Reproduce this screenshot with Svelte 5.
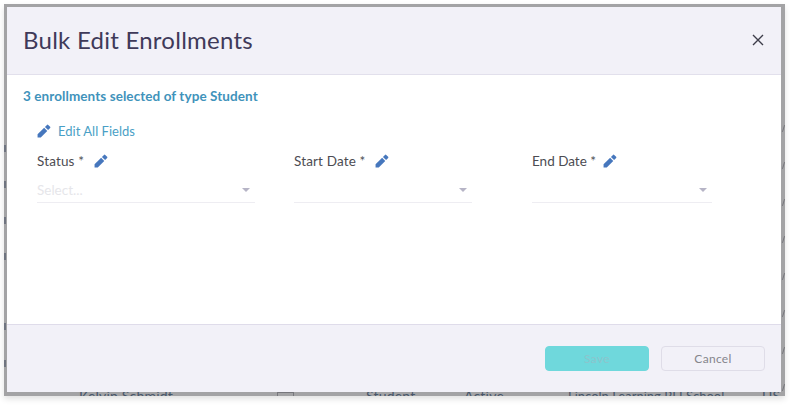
<script>
	const fields = [
		{ label: 'Status *', placeholder: 'Select...', width: 218 },
		{ label: 'Start Date *', placeholder: '', width: 178 },
		{ label: 'End Date *', placeholder: '', width: 180 }
	];
	const pencilBody = 'M1 17.6V23h5.4L17.6 11.8l-5.4-5.4L1 17.6z';
	const pencilTop = 'M22.5 6.9a1.5 1.5 0 0 0 0-2.1l-3.3-3.3a1.5 1.5 0 0 0-2.1 0l-3.5 3.5 5.4 5.4 3.5-3.5z';
	// background table shows through the frame at the edges
	const rightTicks = [125, 162, 199, 236, 273, 310, 347, 384];
	const leftTicks = [145, 181, 217, 253, 323, 360];
</script>

<div class="page">
	<div class="backdrop">
		<!-- table row behind the modal -->
		<div class="behind">
			<span style="left: 75px">Kelvin Schmidt</span>
			<i class="box"></i>
			<span style="left: 362px">Student</span>
			<span style="left: 460px">Active</span>
			<span class="school" style="left: 564px">Lincoln Learning RLI School</span>
			<span style="left: 758px">US</span>
		</div>
		{#each rightTicks as y}
			<i class="tick" style="top: {y - 4}px; right: 1px"></i>
		{/each}
		{#each leftTicks as y}
			<i class="tick left" style="top: {y - 4}px; left: 0"></i>
		{/each}

		<div class="dialog">
			<header class="head">
				<h1>Bulk Edit Enrollments</h1>
				<button class="close" aria-label="Close">
					<svg width="12" height="12" viewBox="0 0 12 12" fill="none" stroke="#3d3d4a" stroke-width="1.4">
						<path d="M1 1l10 10M11 1L1 11" />
					</svg>
				</button>
			</header>

			<main class="body">
				<p class="count">3 enrollments selected of type Student</p>
				<a class="edit-all" href="#all">
					<svg width="14" height="14" viewBox="0 0 24 24" fill="#4677bd"><path d={pencilBody} /><path d={pencilTop} /></svg>
					Edit All Fields
				</a>
				<div class="fields">
					{#each fields as f}
						<div class="field">
							<div class="label">
								<span>{f.label}</span>
								<svg width="14" height="14" viewBox="0 0 24 24" fill="#4677bd"><path d={pencilBody} /><path d={pencilTop} /></svg>
							</div>
							<div class="select" style="width: {f.width}px">
								<span class="placeholder">{f.placeholder}</span>
								<span class="caret"></span>
							</div>
						</div>
					{/each}
				</div>
			</main>

			<footer class="foot">
				<button class="btn save" disabled>Save</button>
				<button class="btn cancel">Cancel</button>
			</footer>
		</div>
	</div>
</div>

<style>
	:global(body) {
		margin: 0;
		background: #fff;
	}

	.page {
		width: 790px;
		height: 407px;
		padding: 4px 5px 0 4px;
		box-sizing: border-box;
		font-family: Lato, "Open Sans", sans-serif;
	}

	.backdrop {
		position: relative;
		height: 392px;
		padding: 3px 4px 4px 3px;
		box-sizing: border-box;
		background: #a3a3a5;
		box-shadow: 0 3px 6px rgba(0, 0, 0, 0.12);
		overflow: hidden;
	}

	.behind span {
		position: absolute;
		bottom: -8px;
		font-size: 14px;
		letter-spacing: 0.2px;
		color: #47566a;
		white-space: nowrap;
	}

	.behind .school {
		font-size: 13px;
		letter-spacing: 0;
	}

	.box {
		position: absolute;
		left: 273px;
		bottom: -4px;
		width: 15px;
		height: 6px;
		border: 1px solid #77777c;
	}

	.tick {
		position: absolute;
		width: 1px;
		height: 7px;
		background: #77777c;
		transform: rotate(18deg);
	}

	.tick.left {
		width: 2px;
		background: #6f7480;
		transform: none;
	}

	.dialog {
		position: relative;
		height: 100%;
		display: flex;
		flex-direction: column;
		background: #fff;
	}

	.head {
		height: 68px;
		flex: none;
		box-sizing: border-box;
		display: flex;
		align-items: center;
		justify-content: space-between;
		padding: 0 16px 2px;
		background: #f2f1f8;
		border-bottom: 1px solid #e2e0ec;
	}

	h1 {
		margin: 0;
		font-size: 24px;
		font-weight: 400;
		letter-spacing: 0.25px;
		color: #3f3a5a;
	}

	.close {
		display: flex;
		margin-right: 1px;
		background: none;
		border: none;
		padding: 0;
	}

	.body {
		flex: 1;
		padding: 13px 16px 0;
	}

	.count {
		margin: 0;
		font-size: 13.5px;
		line-height: 16px;
		font-weight: 700;
		letter-spacing: 0.08px;
		color: #3f93bb;
	}

	.edit-all {
		display: flex;
		align-items: center;
		gap: 7px;
		margin: 19px 0 0 14px;
		font-size: 13px;
		line-height: 16px;
		letter-spacing: 0.02px;
		color: #4a9fc6;
		text-decoration: none;
	}

	.fields {
		display: flex;
		margin: 14px 0 0 14px;
	}

	.field:nth-child(1) {
		width: 257px;
	}

	.field:nth-child(2) {
		width: 238px;
	}

	.field:nth-child(3) .label {
		gap: 7px;
		letter-spacing: 0;
	}

	.label {
		display: flex;
		align-items: center;
		gap: 10px;
		font-size: 13.5px;
		line-height: 16px;
		letter-spacing: 0.15px;
		color: #4c4c52;
	}

	.select {
		height: 30px;
		margin-top: 4px;
		box-sizing: border-box;
		display: flex;
		align-items: center;
		justify-content: space-between;
		padding: 5px 5px 0 0;
		border-bottom: 1px solid #eeedf2;
	}

	.placeholder {
		font-size: 13.5px;
		color: #e6e6ea;
	}

	.caret {
		width: 0;
		height: 0;
		border-left: 4px solid transparent;
		border-right: 4px solid transparent;
		border-top: 4px solid #b6b4c6;
	}

	.foot {
		height: 68px;
		flex: none;
		box-sizing: border-box;
		display: flex;
		justify-content: flex-end;
		gap: 12px;
		padding: 21px 16px 0 0;
		background: #f2f1f8;
		border-top: 1px solid #dfdcea;
	}

	.btn {
		width: 104px;
		height: 25px;
		box-sizing: border-box;
		border-radius: 4px;
		font-family: inherit;
		font-size: 12px;
		letter-spacing: 0.3px;
		padding: 0;
	}

	.save {
		background: #6fd8dc;
		border: 1px solid #6fd8dc;
		color: #8cc4cc;
	}

	.cancel {
		background: #f2f1f8;
		border: 1px solid #dfdde8;
		color: #85858c;
	}
</style>
